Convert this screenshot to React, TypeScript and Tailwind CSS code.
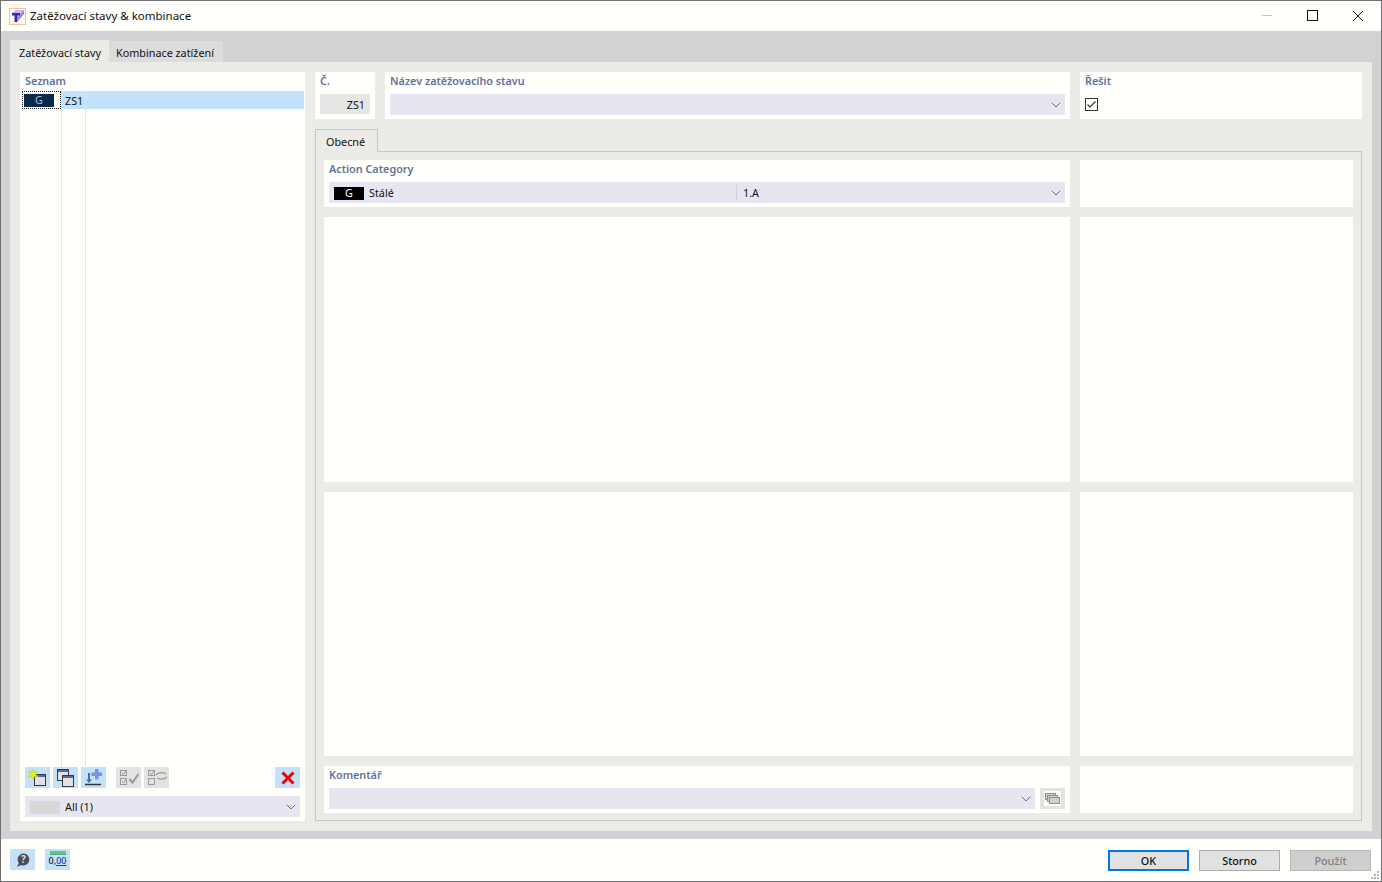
// Load cases & combinations dialog

import { ChevronDown } from "lucide-react";
import type { ReactNode } from "react";

const font = { fontFamily: '"Noto Sans", sans-serif' };

function Label({ children }: { children: ReactNode }) {
  return <div className="h-[18px] text-[10.8px] leading-[18px] font-semibold text-[#63719f]">{children}</div>;
}

function Combo({ className, children }: { className?: string; children?: ReactNode }) {
  return (
    <div className={`flex h-[21px] items-center bg-[#e7e6f0] pr-[1px] text-[10.8px] text-[#111] ${className ?? ""}`}>
      <div className="flex min-w-0 flex-1 items-center pt-px">{children}</div>
      <ChevronDown className="size-[16px] text-[#444]" strokeWidth={1.1} />
    </div>
  );
}

function ToolButton({ disabled, className, children }: { disabled?: boolean; className?: string; children: ReactNode }) {
  return (
    <div className={`flex h-[21px] w-[25px] items-center justify-center ${disabled ? "bg-[#e3e3e2]" : "bg-[#c3e1f8]"} ${className ?? ""}`}>
      {children}
    </div>
  );
}

function WindowGlyph({ x, y }: { x: number; y: number }) {
  return (
    <g transform={`translate(${x} ${y})`}>
      <rect x="0.5" y="0.5" width="11" height="11" fill="#e2e2e2" stroke="#3a3a3a" />
      <rect x="1" y="1" width="10" height="2" fill="#5b63b8" />
    </g>
  );
}

function Cell({ className, children }: { className?: string; children?: ReactNode }) {
  return <div className={`bg-[#fffffb] ${className ?? ""}`}>{children}</div>;
}

export default function App() {
  return (
    <div style={font} className="flex h-[882px] w-[1382px] flex-col overflow-hidden border border-[#707070] bg-[#fffffb] text-[#111]">
      {/* Title bar */}
      <div className="flex h-[30px] shrink-0 items-center pl-[8px]">
        <svg width="17" height="17" viewBox="0 0 17 17">
          <rect x="0.5" y="0.5" width="16" height="16" fill="#fbfaff" stroke="#f2c48f" />
          <path d="M3 5 L7 2 H15 L12 5 Z" fill="#c9b5ee" />
          <path d="M12 5 L15 2 V6 L9 13 V9 Z" fill="#9c7fdc" />
          <path d="M3 5 H11 V7.5 H8.5 V14 H5.5 V7.5 H3 Z" fill="#3b2a9a" />
        </svg>
        <span className="ml-[4px] pb-px text-[11.5px] text-[#111]">Zatěžovací stavy &amp; kombinace</span>
        <div className="ml-auto flex items-center pr-[18px] pb-px">
          <div className="mr-[35px] h-px w-[10px] bg-[#c4c4c4]" />
          <div className="mr-[35px] size-[11px] border border-[#111]" />
          <svg width="10" height="10" viewBox="0 0 10 10" stroke="#111" strokeWidth="1">
            <path d="M0 0 L10 10 M10 0 L0 10" />
          </svg>
        </div>
      </div>

      {/* Main area */}
      <div className="flex min-h-0 flex-1 flex-col bg-[#d2d2d4] px-[9px] pt-[9px] pb-[8px]">
        {/* Tabs */}
        <div className="flex h-[22px] shrink-0 items-end text-[10.8px]">
          <div className="flex h-[22px] w-[99px] items-center bg-[#ebebe8] pt-[4px] pl-[9px]">Zatěžovací stavy</div>
          <div className="flex h-[21px] w-[114px] items-center bg-[#dcdcdc] pt-[3px] pl-[7px]">Kombinace zatížení</div>
        </div>

        <div className="flex min-h-0 flex-1 gap-[10px] bg-[#ebebe8] p-[10px]">
          {/* List panel */}
          <Cell className="flex w-[285px] shrink-0 flex-col pb-[4px]">
            <div className="h-[19px] px-[5px]">
              <Label>Seznam</Label>
            </div>
            <div className="ml-[2px] mr-px flex min-h-0 flex-1">
              <div className="w-[40px] border-r border-[#e4e4e4]">
                <div className="flex h-[18px] items-center justify-start border border-dotted border-[#111] pl-[1px]">
                  <div className="flex h-[13px] w-[30px] items-center justify-center bg-[#0b2a4a] pt-px text-[10.8px] text-[#8fc4ee]">G</div>
                </div>
              </div>
              <div className="w-[24px] border-r border-[#e4e4e4]">
                <div className="flex h-[18px] items-center bg-[#c3e3fb] pt-[2px] pl-[3px] text-[10.8px]">ZS1</div>
              </div>
              <div className="flex-1">
                <div className="h-[18px] bg-[#c3e3fb]" />
              </div>
            </div>

            {/* List toolbar */}
            <div className="flex h-[21px] shrink-0 px-[5px]">
              <ToolButton>
                <svg width="25" height="21" viewBox="0 0 25 21">
                  <WindowGlyph x={9} y={7} />
                  <path d="M8 2 L9.2 5 L12.8 4.2 L10.8 7.2 L13 10 L9.6 9.6 L8 12.4 L6.6 9.6 L3 10 L5.2 7.2 L3.4 4.2 L6.8 5 Z" fill="#d8f02a" stroke="#b4cc2a" strokeWidth="0.5" />
                </svg>
              </ToolButton>
              <ToolButton className="ml-[3px]">
                <svg width="25" height="21" viewBox="0 0 25 21">
                  <WindowGlyph x={4} y={2} />
                  <WindowGlyph x={9} y={8} />
                </svg>
              </ToolButton>
              <ToolButton className="ml-[3px]">
                <svg width="25" height="21" viewBox="0 0 25 21">
                  <path d="M14 2 H17.5 V5.5 H21 V9 H17.5 V12.5 H14 V9 H10.5 V5.5 H14 Z" fill="#7f8fe8" />
                  <path d="M8 6 V14" stroke="#3d6fb8" strokeWidth="2" />
                  <path d="M5 12.5 L8 16 L11 12.5 Z" fill="#3d6fb8" />
                  <path d="M4 17.5 H20" stroke="#333" strokeWidth="1.5" />
                </svg>
              </ToolButton>
              <ToolButton disabled className="ml-[10px]">
                <svg width="25" height="21" viewBox="0 0 25 21" fill="none" stroke="#9a9a9a">
                  <rect x="4.5" y="3.5" width="6" height="5" />
                  <rect x="4.5" y="11.5" width="6" height="6" />
                  <path d="M6 5.5 L7.5 7.5 L10.5 3 M6 14 L7.5 16 L10.5 11.5" />
                  <path d="M13.5 12 L16.5 15.5 L22.5 7" strokeWidth="2" />
                </svg>
              </ToolButton>
              <ToolButton disabled className="ml-[3px]">
                <svg width="25" height="21" viewBox="0 0 25 21" fill="none" stroke="#9a9a9a">
                  <rect x="4.5" y="3.5" width="6" height="5" />
                  <rect x="4.5" y="11.5" width="6" height="6" />
                  <path d="M6 5.5 L7.5 7.5 L10.5 3" />
                  <path d="M12 8 C15 5 18 5 22 7 M23 10 C20 12.5 16 12.5 13 11" strokeWidth="1.25" />
                </svg>
              </ToolButton>
              <ToolButton className="ml-auto">
                <svg width="14" height="14" viewBox="0 0 14 14" stroke="#f00000" strokeWidth="3">
                  <path d="M1.5 1.5 L12.5 12.5 M12.5 1.5 L1.5 12.5" />
                </svg>
              </ToolButton>
            </div>
            <div className="mt-[8px] shrink-0 px-[5px]">
              <Combo>
                <div className="ml-[5px] h-[13px] w-[30px] bg-[#d8d8d8]" />
                <span className="ml-[5px]">All (1)</span>
              </Combo>
            </div>
          </Cell>

          {/* Right side */}
          <div className="flex min-w-0 flex-1 flex-col">
            <div className="flex h-[47px] shrink-0 gap-[10px]">
              <Cell className="w-[60px] px-[5px]">
                <Label>Č.</Label>
                <div className="mt-[4px] flex h-[20px] items-center justify-end bg-[#e6e6e4] pt-[2px] pr-[5px] text-[10.8px]">ZS1</div>
              </Cell>
              <Cell className="w-[685px] px-[5px]">
                <Label>Název zatěžovacího stavu</Label>
                <Combo className="mt-[4px]" />
              </Cell>
              <Cell className="flex-1 px-[5px]">
                <Label>Řešit</Label>
                <div className="mt-[8px] flex size-[13px] items-center justify-center border border-[#333]">
                  <svg width="11" height="11" viewBox="0 0 11 11" fill="none" stroke="#333" strokeWidth="1.2">
                    <path d="M1.5 5.5 L4 8 L9.5 2.5" />
                  </svg>
                </div>
              </Cell>
            </div>

            {/* Inner tab */}
            <div className="relative z-10 mt-[10px] -mb-px flex h-[23px] w-[63px] shrink-0 items-center border border-b-0 border-[#c5c6d0] bg-[#ebebe8] pt-[2px] pl-[10px] text-[10.8px]">
              Obecné
            </div>
            <div className="grid min-h-0 flex-1 grid-cols-[746px_273px] grid-rows-[47px_265px_264px_47px] gap-[10px] border border-[#c5c6d0] pt-[8px] pl-[8px]">
              <Cell className="px-[5px]">
                <Label>Action Category</Label>
                <Combo className="mt-[4px]">
                  <div className="ml-[5px] flex h-[13px] w-[30px] items-center justify-center bg-black text-white">G</div>
                  <span className="ml-[5px] w-[368px] border-r border-[#d0d0da]">Stálé</span>
                  <span className="ml-[6px]">1.A</span>
                </Combo>
              </Cell>
              <Cell />
              <Cell />
              <Cell />
              <Cell />
              <Cell />
              <Cell className="px-[5px]">
                <Label>Komentář</Label>
                <div className="mt-[4px] flex gap-[5px]">
                  <Combo className="flex-1" />
                  <div className="flex h-[21px] w-[25px] items-center justify-center bg-[#e3e3e2]">
                    <svg width="17" height="15" viewBox="0 0 17 15" fill="#cfcfcf" stroke="#8f8f8f" className="bg-[#fffffb]">
                      <rect x="1.5" y="2.5" width="10" height="6" />
                      <rect x="3.5" y="4.5" width="10" height="6" />
                      <rect x="5.5" y="6.5" width="10" height="6" />
                    </svg>
                  </div>
                </div>
              </Cell>
              <Cell />
            </div>
          </div>
        </div>
      </div>

      {/* Footer */}
      <div className="relative flex h-[42px] shrink-0 items-start pt-[10px] pr-[10px] pl-[9px]">
        <div className="flex h-[21px] w-[25px] items-center justify-center bg-[#c3e1f8]">
          <svg width="16" height="16" viewBox="0 0 16 16">
            <path d="M8.5 1.5 A6 6 0 1 1 6 13 L2 15 L3.8 11 A6 6 0 0 1 8.5 1.5 Z" fill="#4d4d4d" />
            <text x="8.5" y="11" textAnchor="middle" fontSize="10" fontWeight="700" fill="#c3e1f8" fontFamily="Noto Sans">?</text>
          </svg>
        </div>
        <div className="ml-[10px] flex h-[21px] w-[25px] flex-col items-center bg-[#c3e1f8] pt-[2px]">
          <div className="h-[4px] w-[16px] border-b border-dotted border-[#3f9f68] bg-[#5fc48a]" />
          <div className="text-[9px] leading-[12px] font-medium text-[#111]">
            0,<span className="text-[#1f3a93] underline">00</span>
          </div>
        </div>
        <div className="mt-px ml-auto flex gap-[10px] text-[10.8px] font-medium">
          <div className="flex h-[21px] w-[81px] items-center justify-center border-2 border-[#0078e0] bg-[#e1e1e1] pt-px">OK</div>
          <div className="flex h-[21px] w-[81px] items-center justify-center border border-[#adadad] bg-[#e1e1e1] pt-px">Storno</div>
          <div className="flex h-[21px] w-[81px] items-center justify-center border border-[#b8b8b8] bg-[#cfcfcf] pt-px text-[#808080]">Použít</div>
        </div>
        {/* resize grip */}
        <svg className="absolute right-0 bottom-0" width="11" height="11" viewBox="0 0 11 11" fill="#b5b5b5">
          <rect x="7" y="1" width="2" height="2" />
          <rect x="4" y="4" width="2" height="2" />
          <rect x="7" y="4" width="2" height="2" />
          <rect x="1" y="7" width="2" height="2" />
          <rect x="4" y="7" width="2" height="2" />
          <rect x="7" y="7" width="2" height="2" />
        </svg>
      </div>
    </div>
  );
}
